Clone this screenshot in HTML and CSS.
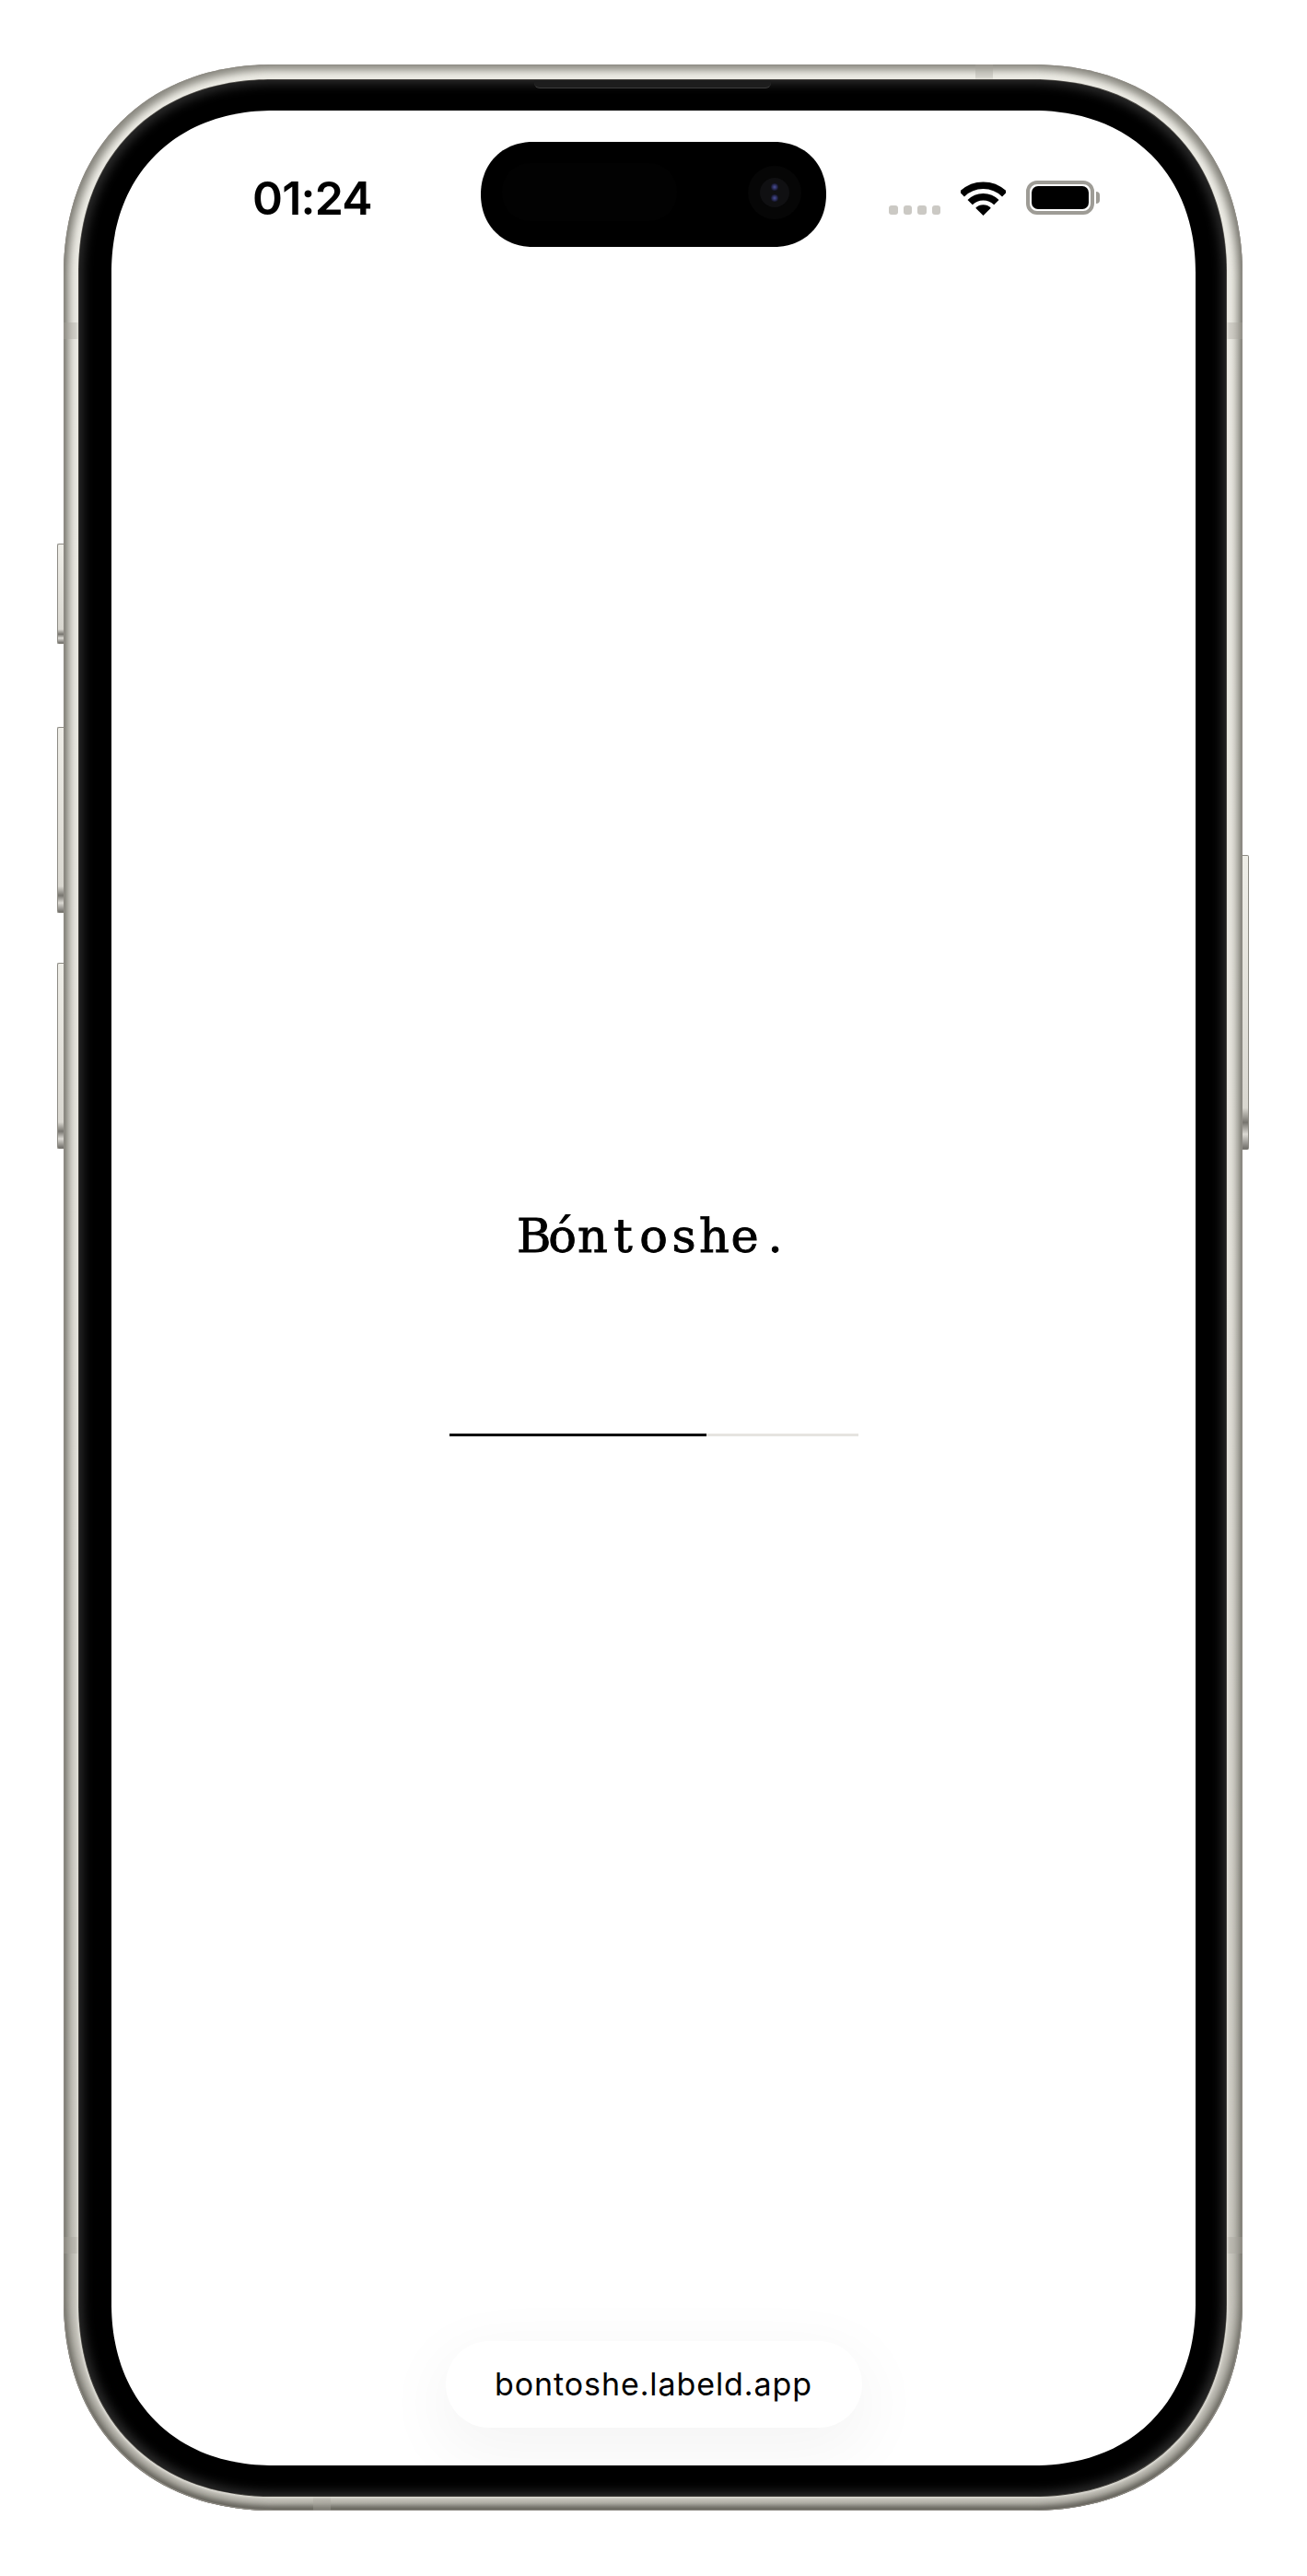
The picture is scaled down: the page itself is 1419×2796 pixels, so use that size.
FILE: index.html
```html
<!DOCTYPE html>
<html lang="en">
<head>
<meta charset="utf-8">
<title>Bóntoshe</title>
<link rel="stylesheet" href="styles.css">
</head>
<body>
<div class="frame">
  <span class="btn btn-action"></span>
  <span class="btn btn-up"></span>
  <span class="btn btn-down"></span>
  <span class="btn btn-power"></span>
  <span class="band band-top"></span>
  <span class="band band-bottom"></span>
  <span class="band band-l1"></span>
  <span class="band band-l2"></span>
  <span class="band band-r1"></span>
  <span class="band band-r2"></span>
  <div class="bezel">
    <span class="speaker"></span>
    <div class="screen">
      <header class="status">
        <span class="time">01:24</span>
        <div class="island">
          <span class="island-sensor"></span>
          <span class="camera"><span class="lens"><i class="dot"></i><i class="dot"></i></span></span>
        </div>
        <div class="signal"><i></i><i></i><i></i><i></i></div>
        <svg class="wifi" viewBox="0 0 49 37" aria-hidden="true">
          <path d="M1.3 13.8A32.8 32.8 0 0 1 47.7 13.8" fill="none" stroke="#000" stroke-width="7.5"/>
          <path d="M10.15 22.65A20.3 20.3 0 0 1 38.85 22.65" fill="none" stroke="#000" stroke-width="7.5"/>
          <path d="M24.5 37L16.2 28.7A11.7 11.7 0 0 1 32.8 28.7Z" fill="#000"/>
        </svg>
        <div class="battery"><span class="battery-body"><span class="battery-fill"></span></span><span class="battery-cap"></span></div>
      </header>
      <main class="splash">
        <h1 class="brand"><span>B</span><span>ó</span><span>n</span><span>t</span><span>o</span><span>s</span><span>h</span><span>e</span><span>.</span></h1>
        <div class="progress"><div class="progress-fill" style="width:63%"></div></div>
      </main>
      <footer class="foot">
        <div class="url">bontoshe.labeld.app</div>
      </footer>
    </div>
  </div>
</div>
</body>
</html>
```
FILE: styles.css
```css
* { box-sizing: border-box; }
html, body { margin: 0; padding: 0; background: #fff; }
body { padding: 70px 0 0 69px; min-height: 2796px; }

.frame {
  position: relative;
  width: 1280px;
  height: 2655px;
  padding: 17px 18px 16px 17px;
  border-radius: 228px;
  corner-shape: superellipse(1.12);
  background: linear-gradient(180deg, #eeede6 0%, #e4e2db 50%, #c4c2ba 100%);
  box-shadow: inset 0 0 0 1px #8f8c85, inset 0 0 9px 6px rgba(100, 98, 90, .72), inset 0 -4px 5px rgba(50, 48, 44, .65);
}

.btn {
  position: absolute;
  width: 7px;
  border: 1px solid #8d8b84;
  background: linear-gradient(180deg, #efeee8 0%, #d9d7d0 86%, #77756f 91%, #dcdad4 95%, #6f6d68 100%);
}
.btn-action, .btn-up, .btn-down { left: -7px; border-right: 0; border-radius: 2px 0 0 2px; }
.btn-action { top: 520px; height: 109px; }
.btn-up { top: 719px; height: 202px; }
.btn-down { top: 975px; height: 202px; }
.btn-power { right: -7px; top: 858px; height: 320px; border-left: 0; border-radius: 0 2px 2px 0; }

.band { position: absolute; background: rgba(165, 163, 155, .38); }
.band-top { left: 990px; top: 0; width: 19px; height: 17px; }
.band-bottom { left: 271px; bottom: 0; width: 19px; height: 16px; }
.band-l1 { left: 0; top: 280px; width: 17px; height: 18px; }
.band-l2 { left: 0; top: 2358px; width: 17px; height: 18px; }
.band-r1 { right: 0; top: 280px; width: 18px; height: 18px; }
.band-r2 { right: 0; top: 2358px; width: 18px; height: 18px; }

.bezel {
  position: relative;
  height: 100%;
  padding: 33px 33px 33px 35px;
  border-radius: 210px;
  corner-shape: superellipse(1.12);
  background: #000;
  box-shadow: 0 0 0 1px #45433f, 0 0 3px 2px #e9e8e1, inset 0 0 12px 4px #2c2c2c;
}

.speaker {
  position: absolute;
  left: 494px;
  top: 0;
  width: 257px;
  height: 9px;
  background: #1d1d1d;
  border-bottom: 1px solid #3c3c3c;
  border-radius: 0 0 6px 6px;
}

.screen {
  height: 100%;
  display: flex;
  flex-direction: column;
  overflow: hidden;
  background: #fff;
  border-radius: 176px;
  corner-shape: superellipse(1.12);
}

.status {
  display: flex;
  align-items: flex-start;
  padding: 34px 104px 0 153px;
}
.time {
  width: 128px;
  margin-top: 36px;
  margin-right: 120px;
  font: 600 50px/50px Inter, "Liberation Sans", sans-serif;
  letter-spacing: -.8px;
  white-space: nowrap;
  color: #000;
}
.island {
  position: relative;
  flex: none;
  width: 375px;
  height: 114px;
  margin-right: 68px;
  border-radius: 57px;
  corner-shape: superellipse(1.08);
  background: #000;
}
.island-sensor {
  position: absolute;
  left: 23px;
  top: 23px;
  width: 190px;
  height: 63px;
  border-radius: 30px;
  background: #020202;
}
.camera {
  position: absolute;
  left: 290px;
  top: 26px;
  width: 58px;
  height: 58px;
  border-radius: 50%;
  background: #060606;
  display: flex;
  align-items: center;
  justify-content: center;
}
.lens {
  width: 32px;
  height: 32px;
  border-radius: 50%;
  background: #101012;
  display: flex;
  flex-direction: column;
  align-items: center;
  justify-content: center;
  gap: 4px;
}
.dot {
  width: 8px;
  height: 8px;
  border-radius: 50%;
  background: radial-gradient(circle, #4a4f9a 0, #15152a 70%);
}
.signal {
  display: flex;
  gap: 6px;
  margin-top: 69px;
  margin-right: 22px;
}
.signal i {
  width: 9.5px;
  height: 10px;
  border-radius: 3px;
  background: #cbc9c4;
}
.wifi {
  flex: none;
  width: 49px;
  height: 37px;
  margin-top: 43px;
  margin-right: 22px;
}
.battery {
  display: flex;
  align-items: center;
  margin-top: 42px;
}
.battery-body {
  width: 74px;
  height: 37px;
  padding: 2px;
  border: 4px solid #9e9c96;
  border-radius: 12px;
  display: flex;
}
.battery-fill {
  flex: 1;
  border-radius: 7px;
  background: #000;
}
.battery-cap {
  width: 4px;
  height: 13px;
  margin-left: 2px;
  border-radius: 0 4px 4px 0;
  background: #9e9c96;
}

.splash {
  flex: 1;
  display: flex;
  flex-direction: column;
  align-items: center;
}
.brand {
  display: flex;
  margin: 1046px 0 0;
  font: 400 51px/56px "DejaVu Serif", serif;
  -webkit-text-stroke: .9px #000;
  color: #000;
}
.brand span {
  width: 33px;
  text-align: center;
}
.progress {
  width: 444px;
  height: 3px;
  margin-top: 186px;
  background: #e6e4e0;
}
.progress-fill {
  height: 100%;
  background: #000;
}

.foot {
  display: flex;
  justify-content: center;
  padding-bottom: 41px;
}
.url {
  width: 452px;
  height: 94px;
  border-radius: 47px;
  background: #fff;
  box-shadow: 0 20px 70px 10px rgba(0, 0, 0, .045);
  display: flex;
  align-items: center;
  justify-content: center;
  font: 400 34px/1 Inter, "Liberation Sans", sans-serif;
  letter-spacing: .9px;
  color: #000;
}
```
